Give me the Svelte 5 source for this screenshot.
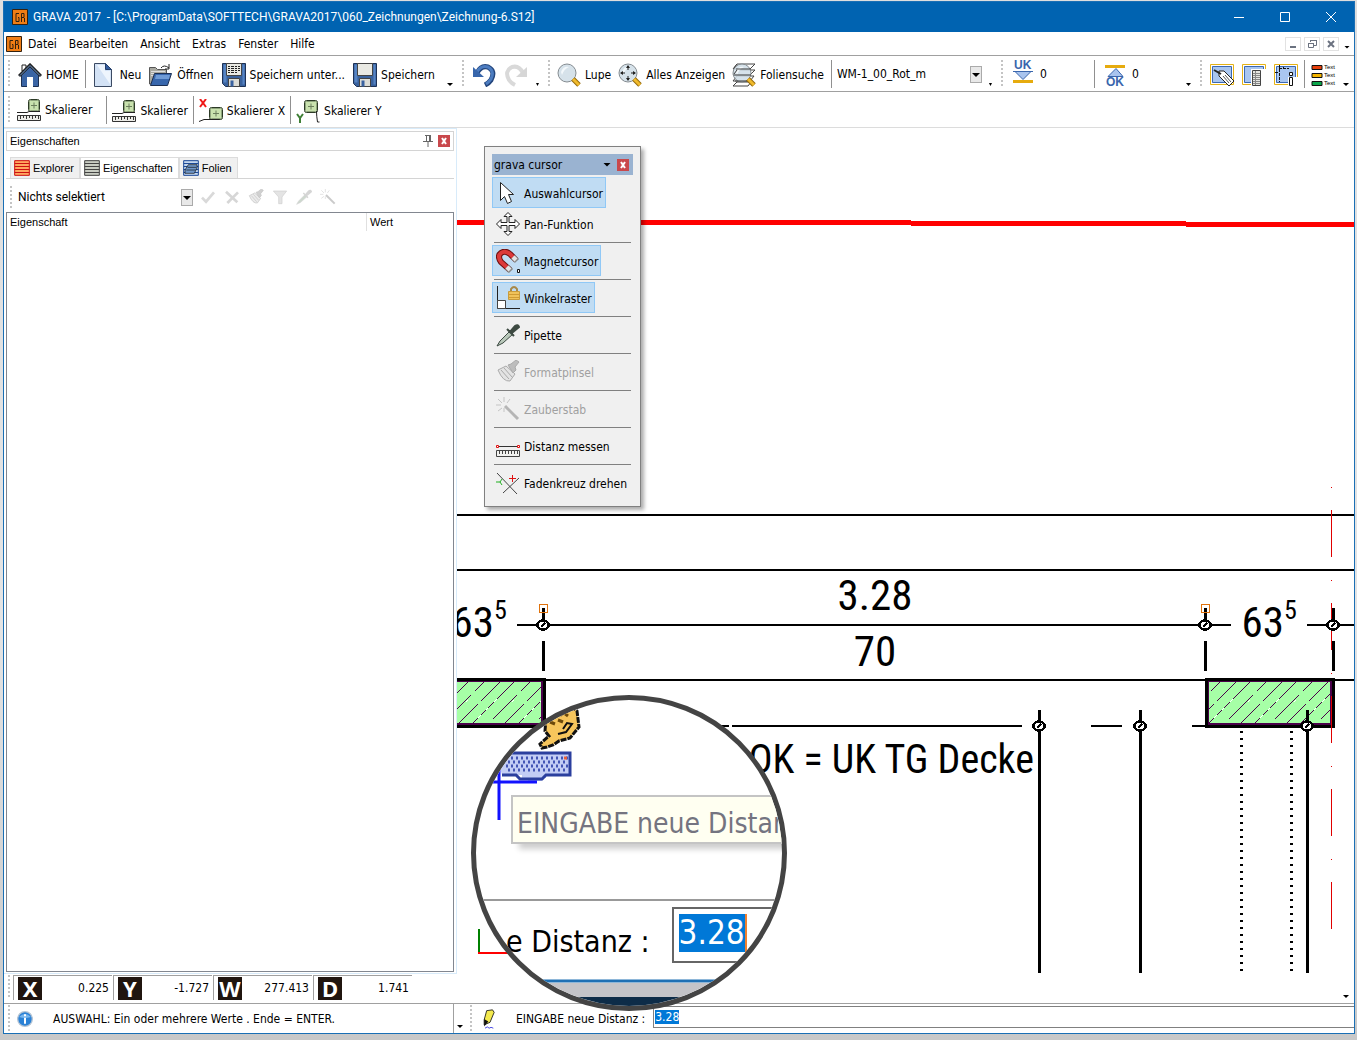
<script>
  import { onMount } from "svelte";

  const menu = ["Datei", "Bearbeiten", "Ansicht", "Extras", "Fenster", "Hilfe"];

  const fileTools = [
    { icon: "home", label: "HOME", divider: true },
    { icon: "new", label: "Neu" },
    { icon: "open", label: "Öffnen" },
    { icon: "saveas", label: "Speichern unter..." },
    { icon: "save", label: "Speichern" },
  ];

  const zoomTools = [
    { icon: "zoom", label: "Lupe" },
    { icon: "zoomall", label: "Alles Anzeigen" },
    { icon: "zoomlayer", label: "Foliensuche" },
  ];

  const scaleTools = [
    { icon: "scale", label: "Skalierer" },
    { icon: "scale", label: "Skalierer" },
    { icon: "scalex", label: "Skalierer X" },
    { icon: "scaley", label: "Skalierer Y" },
  ];

  const panelTabs = [
    { icon: "listred", label: "Explorer" },
    { icon: "listgray", label: "Eigenschaften" },
    { icon: "listblue", label: "Folien" },
  ];

  const panelTools = [
    { icon: "check", label: "Übernehmen" },
    { icon: "cross", label: "Verwerfen" },
    { icon: "brush", label: "Formatpinsel" },
    { icon: "filter", label: "Filter" },
    { icon: "dropper", label: "Pipette" },
    { icon: "wand", label: "Zauberstab" },
  ];

  const coords = [
    { axis: "X", value: "0.225" },
    { axis: "Y", value: "-1.727" },
    { axis: "W", value: "277.413" },
    { axis: "D", value: "1.741" },
  ];

  let cursors = $state([
    { icon: "arrow", label: "Auswahlcursor", on: true },
    { icon: "pan", label: "Pan-Funktion", divider: true },
    { icon: "magnet", label: "Magnetcursor", on: true, divider: true },
    { icon: "angle", label: "Winkelraster", on: true, divider: true },
    { icon: "dropper", label: "Pipette", divider: true },
    { icon: "brush", label: "Formatpinsel", disabled: true, divider: true },
    { icon: "wand", label: "Zauberstab", disabled: true, divider: true },
    { icon: "measure", label: "Distanz messen", divider: true },
    { icon: "rotate", label: "Fadenkreuz drehen" },
  ]);

  let activeTab = $state("Eigenschaften");
  let distance = $state("3.28");
  let distanceInput;

  // sheet geometry, in drawing pixels
  const extensions = [543, 1205, 1333];
  const knots = [
    [543, 625],
    [1205, 625],
    [1333, 625],
    [1039, 726],
    [1140, 726],
    [1307, 726],
  ];
  const posts = [1039, 1140, 1307];
  const walls = [
    { x: 417, w: 127 },
    { x: 1206, w: 127 },
  ];

  onMount(() => {
    distanceInput.focus();
    distanceInput.select();
  });
</script>

{#snippet icon(name)}
  <svg class="icon" viewBox="0 0 24 24" aria-hidden="true">
    {#if name === "home"}
      <path d="M4 2h4v6h-4z" fill="#fff" stroke="#222" />
      <path d="M3.500 12L12 4l8.500 8v11.500h-17z" fill="#3a64a4" stroke="#1c2f52" />
      <path d="M1 13L12 2l11 11" fill="none" stroke="#222" stroke-width="3" />
      <path d="M2 12.500L12 2.500l10 10" fill="none" stroke="#6f9ad2" stroke-width="1" />
      <path d="M9 24v-10h6v10z" fill="#fff" />
    {:else if name === "new"}
      <path d="M2.500 .5h11l6 6v17h-17z" fill="#d3e2f5" stroke="#3b4a63" />
      <path d="M5 2h8v6h5v13z" fill="#eef5fd" />
      <path d="M13.500 .5v6h6z" fill="#345d9e" stroke="#26406c" />
    {:else if name === "open"}
      <path d="M.5 21V4.500h6l2 2h9v14z" fill="#a8a8a0" stroke="#555" />
      <path d="M2 8.500h14M2 10.500h14M2 12.500h14" stroke="#ddd" />
      <path d="M5.500 10.500h17l-4 12h-17z" fill="#3867ad" stroke="#1c2f52" />
      <path d="M7 12h14l-1 4H6z" fill="#6f9bd6" />
      <path d="M12 5q3-4 8 0M20 1v5h-4" fill="none" stroke="#222" />
    {:else if name === "save" || name === "saveas"}
      <path d="M.5 .5h23v23h-20l-3-3z" fill="#39619c" stroke="#1d3155" />
      <path d="M1.500 1.500h3v18h-3zM20.500 1.500h2v20h-2z" fill="#5684c4" />
      <path d="M4.500 .5h15v12h-15z" fill="#e9e9e3" stroke="#444" />
      <path d="M6.500 15.500h11v8h-11z" fill="#dcdcd6" stroke="#444" />
      <path d="M8.500 17.500h3v6h-3z" fill="#3a62a0" />
      {#if name === "saveas"}
        <path d="M6 3.500h12M6 5.500h12M6 7.500h12M6 9.500h9" stroke="#222" stroke-dasharray="2 1 3 1" />
      {/if}
    {:else if name === "undo"}
      <path d="M5 10Q9 2 16 4Q24 8 19 17Q17 20 13 22" fill="none" stroke="#23457c" stroke-width="5" />
      <path d="M5 9Q9 2 16 4Q23 8 19 16Q17 19 14 21" fill="none" stroke="#4c7cc0" stroke-width="3" />
      <path d="M1 4v10h11z" fill="#3766ab" />
    {:else if name === "redo"}
      <path d="M19 10Q15 2 8 4Q0 8 5 17Q7 20 11 22" fill="none" stroke="#d9d9d9" stroke-width="4" />
      <path d="M23 4v10H12z" fill="#d6d6d6" />
    {:else if name === "zoom" || name === "zoomall" || name === "zoomlayer"}
      {#if name === "zoomlayer"}
        <path d="M5 1h18l-5 5H1zM5 7h18l-5 5H1zM5 13h17l-4 5H1zM5 19h14l-3 4H1z" fill="#fff" stroke="#444" />
      {/if}
      <circle cx="10" cy="10" r="9" fill="#cfdde6" fill-opacity=".85" stroke="#858c91" />
      <path d="M4 9Q6 3 12 4Q7 6 5 12z" fill="#f3f8fb" />
      {#if name === "zoomlayer"}
        <path d="M4 6h15M2 12h17M3 18h12M5 1L2 5M5 7l-3 4" fill="none" stroke="#444" />
      {/if}
      <path d="M16 16l6 6" stroke="#93690b" stroke-width="5" />
      <path d="M16 16l6 6" stroke="#f0ba2c" stroke-width="3" />
      {#if name === "zoomall"}
        <path d="M10 3v4M10 13v4M3 10h4M13 10h4" stroke="#222" stroke-width="1" />
        <path d="M8 5l2-3 2 3zM8 15l2 3 2-3zM5 8l-3 2 3 2zM15 8l3 2-3 2z" fill="#222" />
      {/if}
    {:else if name === "scale" || name === "scalex" || name === "scaley"}
      {#if name === "scale"}
        <rect x="11.500" y="1.500" width="11" height="12" rx="2" fill="#c9e2ae" stroke="#2c3a26" />
        <rect x="12.500" y="2.500" width="9" height="10" rx="1" fill="none" stroke="#8fa57d" />
        <path d="M14 7.500h6M17 4.500v6" stroke="#6b7f5c" />
        <path d="M0 14.500h10l2-1h11" fill="none" stroke="#222" />
        <path d="M.5 17.500h23v5H.5z" fill="#ecece8" stroke="#333" />
        <path d="M3.500 18v3M6.500 18v2M9.500 18v3M12.500 18v2M15.500 18v3M18.500 18v2M21.500 18v3" stroke="#333" />
      {:else if name === "scalex"}
        <path d="M1 0l6 8M7 0l-6 8" stroke="#f01818" stroke-width="2" />
        <rect x="10.500" y="8.500" width="13" height="12" rx="2" fill="#c9e2ae" stroke="#2c3a26" />
        <rect x="11.500" y="9.500" width="11" height="10" rx="1" fill="none" stroke="#8fa57d" />
        <path d="M14 14.500h6M17 11.500v6" stroke="#6b7f5c" />
        <path d="M0 22.500q5-3 10-2h10" fill="none" stroke="#222" />
      {:else}
        <rect x="8.500" y="1.500" width="13" height="12" rx="2" fill="#c9e2ae" stroke="#2c3a26" />
        <rect x="9.500" y="2.500" width="11" height="10" rx="1" fill="none" stroke="#8fa57d" />
        <path d="M12 7.500h6M15 4.500v6" stroke="#6b7f5c" />
        <path d="M20.500 12q0 5 1 11h2" fill="none" stroke="#222" />
        <path d="M1 15l3 4 3-4M4 19v5" fill="none" stroke="#3f7f35" stroke-width="2" />
      {/if}
    {:else if name === "uk"}
      <path d="M4 9.500h16l-8 8z" fill="#a9c4ee" stroke="#3a66ad" />
      <path d="M2 9.500h20" stroke="#3a66ad" />
      <path d="M2 18h20v3H2z" fill="#e6ab0e" />
    {:else if name === "ok"}
      <path d="M2 3h20v3H2z" fill="#e6ab0e" />
      <path d="M5 14.500h15l-7-8z" fill="#a9c4ee" stroke="#3a66ad" />
    {:else if name === "viewtag" || name === "viewlist" || name === "viewplan"}
      <path d="M.5 1.500h23v20H.5z" fill="#fff" stroke="#e5b216" />
      <path d="M2.500 3.500h19v16h-19z" fill="#a9c6f0" stroke="#3c68b2" />
      {#if name === "viewtag"}
        <path d="M9 8h5l10 10-5 5L9 13z" fill="#fff" stroke="#222" />
        <path d="M4 7l7 4" stroke="#222" stroke-width="2" />
        <path d="M13 13l6 7M15 12l6 7" stroke="#555" />
      {:else if name === "viewlist"}
        <path d="M9 6h15v18H9z" fill="#fff" />
        <path d="M10.500 7.500h8v15h-8z" fill="#e6e6e2" stroke="#444" />
        <path d="M11 10.500h7M11 12.500h7M11 14.500h7M11 16.500h7M11 18.500h7M11 20.500h7M13.500 8v14" stroke="#888" />
      {:else}
        <path d="M5.500 2v17M1 9.500h4M5 5.500h10M9.500 4v2" stroke="#111" stroke-dasharray="3 1" />
        <path d="M14 14h10v10H14z" fill="#fff" />
        <path d="M15.500 9.500h3v3h-3zM15.500 14.500h3v8h-3z" fill="#fff" stroke="#111" />
      {/if}
    {:else if name === "legend"}
      <path d="M1 2.500h10v4H1z" fill="#e8400c" stroke="#111" />
      <path d="M1 10.500h10v4H1z" fill="#f3b400" stroke="#111" />
      <path d="M1 18.500h10v4H1z" fill="#0ba64b" stroke="#111" />
    {:else if name === "listred" || name === "listgray" || name === "listblue"}
      {@const line = name === "listred" ? "#cc1111" : name === "listgray" ? "#444" : "#1d4a98"}
      <path
        d="M1 1h22v22H1z"
        fill={name === "listred" ? "#ffa860" : name === "listgray" ? "#c9cdc3" : "#c3d6ee"}
        stroke={line}
        stroke-width="1.500"
      />
      <path d="M1 5.250h22M1 9.750h22M1 14.250h22M1 18.750h22" stroke={line} stroke-width="1.500" />
      {#if name === "listblue"}
        <path d="M8 7h13v5l-4 8H3v-5z" fill="#6f97c9" stroke="#111" />
        <path d="M7 11h13M5 15h14" stroke="#111" />
      {/if}
    {:else if name === "check"}
      <path d="M3 13l6 6L21 5" fill="none" stroke="#c9c9c9" stroke-width="4" />
    {:else if name === "cross"}
      <path d="M3 4l17 16M21 5L5 21" stroke="#c6c6c6" stroke-width="4" />
    {:else if name === "filter"}
      <path d="M2 3h20l-7 9v10h-5V12z" fill="#d9d9d9" stroke="#bbb" />
    {:else if name === "arrow"}
      <path d="M4.500 1.500v18l4-4 3 7 4-2-3-7h5z" fill="#fff" stroke="#222" />
    {:else if name === "pan"}
      <path
        d="M12 .5l4 4h-3v6h6v-3l4.500 4.500-4.500 4.500v-3h-6v6h3l-4 4-4-4h3v-6H5v3L.5 12 5 7.500v3h6v-6H8z"
        fill="#fff"
        stroke="#222"
      />
    {:else if name === "magnet"}
      <path d="M14 21L5 13Q1 7 5 4Q9 1 14 5l6 6" fill="none" stroke="#6e1010" stroke-width="6" />
      <path d="M14 21L5 13Q1 7 5 4Q9 1 14 5l6 6" fill="none" stroke="#dc3a3a" stroke-width="4" />
      <path d="M11 18l4 4M17 8l4 4" stroke="#888" stroke-width="6" />
      <path d="M11 18l3 3M17 8l3 3" stroke="#e4e4e4" stroke-width="4" />
      <path d="M21.500 20.500h2v3h-2z" fill="#fff" stroke="#111" />
    {:else if name === "angle"}
      <path d="M1.500 0v22.500H24" fill="none" stroke="#222" />
      <path d="M1.500 14.500h8v8h-8z" fill="#fff" stroke="#444" />
      <path d="M15 6V3q3-4 6 0v3" fill="none" stroke="#a8894a" stroke-width="2" />
      <path d="M12.500 5.500h11v8h-11z" fill="#f0c35a" stroke="#c99c3c" />
      <path d="M13 8.500h10M13 11.500h10" stroke="#d09c34" />
    {:else if name === "dropper"}
      <path d="M1 23l3-5L14 8l3 3L7 20z" fill="#b9c8ba" stroke="currentColor" />
      <path d="M11 6l7 7M14 9l5-6q3-2 4 1l-6 5z" fill="currentColor" stroke="currentColor" stroke-width="2" />
    {:else if name === "brush"}
      <path d="M2 10l8-4 9 8-5 7q-7 1-12-11z" fill="#e3e3e3" stroke="#aaa" />
      <path d="M5 10l8 9M8 8l8 9" stroke="#aaa" />
      <path d="M12 5l5 8 3-3-1-3 4-5-3-2-5 4z" fill="#bdbdbd" stroke="#aaa" />
    {:else if name === "wand"}
      <path d="M9 9l13 13" stroke="#b5b5b5" stroke-width="3" />
      <path d="M8 0v5M0 8h5M2 2l4 4M14 2l-3 4M2 14l4-3M8 11v4" stroke="#c4c4c4" />
    {:else if name === "measure"}
      <path d="M1 12.500h22" stroke="#333" />
      <path d="M.5 11.500h2v2h-2zM21.500 11.500h2v2h-2z" fill="#fff" stroke="#e01010" />
      <path d="M.5 16.500h23v6H.5z" fill="#f2f2f0" stroke="#444" />
      <path d="M3.500 17v3M6.500 17v3M9.500 17v3M12.500 17v3M15.500 17v3M18.500 17v3M21.500 17v3" stroke="#444" />
    {:else if name === "rotate"}
      <path d="M1 2l20 21M7 22L23 7" stroke="#444" />
      <path d="M16.500 4v7M13 7.500h7" stroke="#e01010" />
      <path d="M0 11h4l2 3M4 11l2-3" fill="none" stroke="#20b020" />
    {:else if name === "pencil"}
      <path d="M8 2l7-1 2 3-5 12-7 3V13z" fill="#f3e94e" stroke="#111" stroke-width="1" />
      <path d="M5 12l5 3-5 6z" fill="#111" />
      <path d="M6 23q3-3 5 0q2-2 5 0" fill="none" stroke="#2727e0" />
    {:else if name === "info"}
      <circle cx="12" cy="12" r="11" fill="#2b82d6" stroke="#b5c4d4" stroke-width="2" />
      <path d="M3 9Q12 0 21 9Q12 12 3 9z" fill="#78b6ee" />
      <path d="M12 5v3M12 10v9" stroke="#fff" stroke-width="3" />
    {/if}
  </svg>
{/snippet}

{#snippet logo()}
  <svg class="logo" viewBox="0 0 16 16" aria-hidden="true">
    <path d="M.5 .5h15v15H.5z" fill="#f07d14" stroke="#33210f" />
    <path d="M7 4.500H4v8h3v-4H6M9.500 13V4.500H12v4H10M12.500 9v4" fill="none" stroke="#33210f" />
  </svg>
{/snippet}

{#snippet tool(item)}
  <button type="button" class="tool">
    {@render icon(item.icon)}
    {item.label}
  </button>
{/snippet}

{#snippet more()}
  <button type="button" class="more" aria-label="Weitere Optionen"></button>
{/snippet}

<div class="desktop">
  <div class="window">
    <header class="titlebar">
      {@render logo()}
      <h1>GRAVA 2017&nbsp; - [C:\ProgramData\SOFTTECH\GRAVA2017\060_Zeichnungen\Zeichnung-6.S12]</h1>
      <div class="window-buttons">
        <button type="button" aria-label="Minimieren">
          <svg viewBox="0 0 12 12"><path d="M1 6.500h10" /></svg>
        </button>
        <button type="button" aria-label="Maximieren">
          <svg viewBox="0 0 12 12"><path d="M1.500 1.500h9v9h-9z" /></svg>
        </button>
        <button type="button" aria-label="Schließen">
          <svg viewBox="0 0 12 12"><path d="M1 1l10 10M11 1L1 11" /></svg>
        </button>
      </div>
    </header>

    <nav class="menubar">
      {@render logo()}
      {#each menu as entry}
        <button type="button">{entry}</button>
      {/each}
      <div class="mdi">
        <button type="button" aria-label="Dokument minimieren">
          <svg viewBox="0 0 12 12"><path d="M3 9h6" /></svg>
        </button>
        <button type="button" aria-label="Dokument wiederherstellen">
          <svg viewBox="0 0 12 12"><path class="thin" d="M4.500 4V2.500h6v5H8M4 2.500h7M2.500 5.500h5v4h-5zM2 5.500h6" /></svg>
        </button>
        <button type="button" aria-label="Dokument schließen">
          <svg viewBox="0 0 12 12"><path d="M3 3l6 6M9 3L3 9" /></svg>
        </button>
        {@render more()}
      </div>
    </nav>

    <div class="toolbar">
      <div class="band file">
        {#each fileTools as item}
          {@render tool(item)}
          {#if item.divider}<i class="divider"></i>{/if}
        {/each}
        {@render more()}
      </div>
      <div class="band history">
        <button type="button" class="tool" aria-label="Rückgängig">{@render icon("undo")}</button>
        <button type="button" class="tool" aria-label="Wiederherstellen">{@render icon("redo")}</button>
        {@render more()}
      </div>
      <div class="band zoom">
        {#each zoomTools as item}
          {@render tool(item)}
        {/each}
        <i class="divider"></i>
        <label class="combo">
          <select aria-label="Folie">
            <option>WM-1_00_Rot_m</option>
          </select>
          <i class="drop"></i>
        </label>
        {@render more()}
      </div>
      <div class="band levels">
        <label class="level">
          <span class="mark">{@render icon("uk")}<b>UK</b></span>
          <input value="0" aria-label="Unterkante" />
        </label>
        <i class="divider"></i>
        <label class="level">
          <span class="mark low">{@render icon("ok")}<b>OK</b></span>
          <input value="0" aria-label="Oberkante" />
        </label>
        {@render more()}
      </div>
      <div class="band views">
        <button type="button" class="tool" aria-label="Beschriftung">{@render icon("viewtag")}</button>
        <button type="button" class="tool" aria-label="Liste">{@render icon("viewlist")}</button>
        <button type="button" class="tool" aria-label="Plan">{@render icon("viewplan")}</button>
        <i class="divider"></i>
        <button type="button" class="tool legend">
          {@render icon("legend")}
          <span><small>Text</small><small>Text</small><small>Text</small></span>
        </button>
        {@render more()}
      </div>
    </div>

    <div class="toolbar second">
      <div class="band scales">
        {#each scaleTools as item, i}
          {#if i}<i class="divider"></i>{/if}
          {@render tool(item)}
        {/each}
      </div>
    </div>

    <main>
      <aside>
        <section class="panel">
          <header>
            <h2>Eigenschaften</h2>
            <button type="button" class="pin" aria-label="Anheften">
              <svg viewBox="0 0 12 12"><path d="M3 .5h6M4.500 1v5M8.500 1v5M7.500 1v5M1 6.500h10M6 7v5" /></svg>
            </button>
            <button type="button" class="close" aria-label="Schließen">
              <svg viewBox="0 0 12 12"><path d="M4 3l4 6M8 3L4 9" /></svg>
            </button>
          </header>
          <div class="tabs" role="tablist">
            {#each panelTabs as tab}
              <button
                type="button"
                role="tab"
                aria-selected={activeTab === tab.label}
                class:active={activeTab === tab.label}
                onclick={() => (activeTab = tab.label)}
              >
                {@render icon(tab.icon)}
                {tab.label}
              </button>
            {/each}
          </div>
          <div class="panel-tools">
            <label class="combo">
              <select aria-label="Auswahl">
                <option>Nichts selektiert</option>
              </select>
              <i class="drop"></i>
            </label>
            {#each panelTools as item}
              <button type="button" disabled aria-label={item.label}>{@render icon(item.icon)}</button>
            {/each}
          </div>
          <div class="sheet">
            <table>
              <thead>
                <tr><th>Eigenschaft</th><th>Wert</th></tr>
              </thead>
            </table>
          </div>
        </section>
        <div class="coords">
          {#each coords as c}
            <div class="coord"><b>{c.axis}</b><span>{c.value}</span></div>
          {/each}
        </div>
      </aside>

      <div class="workspace">
        <svg class="drawing" aria-hidden="true">
          <defs>
            <pattern id="hatch" width="46" height="46" patternUnits="userSpaceOnUse">
              <path d="M0 46L46 0" stroke="#4a004a" fill="none" />
              <path d="M-2 18L16 0M16 46L46 16" stroke="#4a004a" stroke-dasharray="18 6" fill="none" />
              <path d="M0 32L32 0M32 46L46 32" stroke="#4a004a" stroke-dasharray="26 3" fill="none" />
              <path d="M18 28l3-3M34 12l3-3M26 20l2-2M6 12l2-2" stroke="#fff" />
            </pattern>
          </defs>
          <!-- sheet origin: top left corner of the workspace -->
          <g transform="translate(-457 -128)">
            <path class="cut" d="M457 222H911M911 223H1186M1186 224H3000" />
            <path class="line" d="M457 515H3000M457 570H3000M517 625H1231M1307 625H3000M457 680H3000" />
            <path class="line" d="M640 726H729M732 726H1022M1091 726H1122M1192 726H1208" />
            {#each walls as wall}
              <rect x={wall.x} y="679" width={wall.w} height="47" fill="#a6ffa6" />
              <rect x={wall.x} y="679" width={wall.w} height="47" fill="url(#hatch)" />
              <rect x={wall.x + 2} y="681" width={wall.w - 4} height="43" class="wall-inner" />
              <rect x={wall.x} y="679" width={wall.w} height="47" class="wall" />
            {/each}
            {#each extensions as x}
              <path class="post" d="M{x} 608v13M{x} 641v30" />
            {/each}
            {#each posts as x}
              <path class="post" d="M{x} 710v10M{x} 731V973" />
            {/each}
            <path class="dots" d="M1241 731V972M1291 731V972" />
            <path class="axis" d="M1331 487V952" />
            {#each knots as [x, y]}
              <g class="knot">
                <ellipse cx={x} cy={y} rx="6" ry="4" />
                <circle cx={x} cy={y} r="5" fill="none" />
                <path d="M{x - 2} {y + 2}l4-4" />
              </g>
            {/each}
            <path class="grip-box" d="M539 604h8v8h-8zM1201 604h8v8h-8z" />
            <path d="M479 929v24" stroke="#008000" stroke-width="2" />
            <path d="M478 953h40" stroke="#f00" stroke-width="2" />
            <g class="dim">
              <text x="875" y="610" text-anchor="middle">3.28</text>
              <text x="875" y="666" text-anchor="middle">70</text>
              <text x="494" y="637" text-anchor="end">63</text>
              <text x="494" y="619" class="sup">5</text>
              <text x="1284" y="637" text-anchor="end">63</text>
              <text x="1284" y="619" class="sup">5</text>
              <text x="1034" y="773" text-anchor="end" class="note">OK = UK TG Decke</text>
            </g>
          </g>
        </svg>
        <i class="more corner"></i>

        <section class="palette">
          <header>
            <h2>grava cursor</h2>
            {@render more()}
            <button type="button" class="close" aria-label="Schließen">
              <svg viewBox="0 0 12 12"><path d="M4 3l4 6M8 3L4 9" /></svg>
            </button>
          </header>
          {#each cursors as c}
            <button type="button" class="cursor" class:on={c.on} disabled={c.disabled} onclick={() => (c.on = !c.on)}>
              {@render icon(c.icon)}
              <span>{c.label}</span>
            </button>
            {#if c.divider}<hr />{/if}
          {/each}
        </section>

        <div class="lens">
          <svg class="lens-art" viewBox="0 0 306 306" aria-hidden="true">
            <path d="M0 200h306" stroke="#999" stroke-width="2" />
            <path d="M0 283h306v14H0z" fill="#c4c4c8" />
            <path d="M0 281h306" stroke="#1f70b4" stroke-width="3" />
            <path d="M0 297h306v9H0z" fill="#0d2c48" />
            <path
              d="M70 18l10-8 14-4 7 5 2 16-9 11-11 3-6 4-6 2-5 1-2-4 9-8-4-5z"
              fill="#f7c65c"
              stroke="#111"
              stroke-width="3"
              stroke-dasharray="6 1"
            />
            <path d="M76 14l3 4M83 11l3 5M74 22l5 2M82 20l5 2M88 13l4 3" stroke="#6d4a0a" stroke-width="3" />
            <path d="M82 34l8-2 6-8-5-1-4 6" fill="none" stroke="#111" stroke-width="2" />
            <path d="M20 53h74v22H70v3h-4v3H52v-3h-6v-3H26z" fill="#c3cdf5" />
            <path d="M24 53h70v22H70l-4 4H44l-4-4H26" fill="none" stroke="#2b3f9e" stroke-width="3" />
            <path
              d="M30 58h62M32 62h60M30 66h62M32 70h60"
              stroke="#4355b5"
              stroke-width="3"
              stroke-dasharray="2 3"
            />
            <path d="M28 58h4M88 58h3" stroke="#e8603c" stroke-width="3" />
            <path d="M23 70v50M17 82h44" stroke="#1212ff" stroke-width="3" />
          </svg>
          <span class="tip">EINGABE neue Distanz</span>
          <div class="lens-row">
            <span>e Distanz :</span>
            <span class="lens-field"><mark>{distance}</mark></span>
          </div>
        </div>
      </div>
    </main>

    <footer>
      <div class="band status">
        {@render icon("info")}
        <p>AUSWAHL: Ein oder mehrere Werte . Ende = ENTER.</p>
      </div>
      {@render more()}
      <label class="band prompt">
        {@render icon("pencil")}
        <span>EINGABE neue Distanz :</span>
        <input bind:value={distance} bind:this={distanceInput} />
      </label>
    </footer>
  </div>
</div>

<style>
  :global(body) {
    margin: 0;
    background: #d6d8da;
  }

  .desktop {
    min-height: 100vh;
    box-sizing: border-box;
    display: flex;
    padding: 1px 2px 6px 3px;
    background: linear-gradient(#dedede, #e4e4e4 60%, #c8c8c8);
    font-family: "DejaVu Sans Condensed", Tahoma, "Noto Sans", sans-serif;
    font-size: 12px;
    color: #000;
  }

  .window {
    flex: 1;
    min-width: 0;
    display: flex;
    flex-direction: column;
    border: 1px solid #1a6fb5;
    background: #fff;
  }

  button,
  input,
  select {
    font: inherit;
    color: inherit;
    border: 0;
    padding: 0;
    margin: 0;
    background: none;
    border-radius: 0;
    outline: none;
  }

  button {
    display: flex;
    align-items: center;
    justify-content: center;
    white-space: nowrap;
  }

  h1,
  h2,
  p {
    margin: 0;
    font-size: inherit;
    font-weight: 400;
    white-space: nowrap;
  }

  svg {
    display: block;
  }

  .icon {
    width: 24px;
    height: 24px;
    flex: none;
  }

  .logo {
    width: 16px;
    height: 16px;
    flex: none;
  }

  .titlebar {
    display: flex;
    align-items: center;
    height: 30px;
    padding-left: 8px;
    gap: 5px;
    background: #0063b1;
    color: #fff;
    font-family: "Segoe UI", Roboto, "Noto Sans", sans-serif;
  }

  .window-buttons {
    display: flex;
    margin-left: auto;
  }

  .window-buttons button {
    width: 46px;
    height: 30px;
  }

  .window-buttons svg,
  .mdi svg,
  .close svg,
  .pin svg {
    width: 12px;
    height: 12px;
    fill: none;
    stroke: currentColor;
  }

  .menubar {
    display: flex;
    align-items: center;
    height: 23px;
    padding-left: 2px;
    border-bottom: 1px solid #a0a0a0;
  }

  .menubar > button {
    padding: 1px 6px 0;
  }

  .mdi {
    display: flex;
    align-items: center;
    gap: 3px;
    margin-left: auto;
    padding-right: 4px;
    color: #6b7280;
  }

  .mdi button:not(.more) {
    width: 16px;
    height: 14px;
    border: 1px solid #e2e2e2;
  }

  .mdi path {
    stroke-width: 2;
  }

  .mdi .thin {
    stroke-width: 1;
  }

  .more {
    align-self: flex-end;
    width: 6px;
    height: 3px;
    margin: 0 5px 5px auto;
    background: #000;
    clip-path: polygon(0 0, 100% 0, 50% 100%);
  }

  .mdi .more {
    margin: 0 0 2px 2px;
  }

  .toolbar {
    display: flex;
    height: 35px;
    border-bottom: 1px solid #a0a0a0;
  }

  .toolbar.second {
    border-bottom-color: #dcdcdc;
  }

  .band {
    display: flex;
    align-items: center;
    gap: 8px;
    box-sizing: border-box;
    min-width: 0;
  }

  .toolbar .band {
    padding-top: 1px;
  }

  .band::before,
  .panel-tools::before,
  .coords::before {
    content: "";
    flex: none;
    width: 2px;
    height: 28px;
    margin-left: 4px;
    background: repeating-linear-gradient(#c4c4c4 0 2px, transparent 2px 4px);
  }

  .file {
    width: 454px;
  }

  .history {
    width: 86px;
  }

  .zoom {
    width: 453px;
    gap: 7px;
  }

  .levels {
    width: 199px;
  }

  .views {
    flex: 1;
  }

  .scales {
    gap: 5px;
  }

  .scales .tool:first-of-type {
    padding: 0 9px 0 2px;
  }

  .tool {
    gap: 4px;
    padding-top: 1px;
  }

  .divider {
    flex: none;
    width: 1px;
    height: 28px;
    background: #909090;
  }

  .file .divider,
  .views .divider {
    margin: 0 -2px;
  }

  .combo {
    display: flex;
    flex: none;
    position: relative;
  }

  .combo select {
    appearance: none;
    width: 145px;
    height: 20px;
  }

  .zoom .combo {
    margin-left: -2px;
  }

  .drop {
    position: absolute;
    right: 0;
    top: 2px;
    width: 10px;
    height: 15px;
    border: 1px solid #aaa;
    background: #e8e8e8;
    pointer-events: none;
  }

  .drop::after {
    content: "";
    position: absolute;
    left: 1px;
    top: 6px;
    border: 4px solid transparent;
    border-top-color: #000;
    border-bottom: 0;
  }

  .level {
    display: flex;
    align-items: center;
    gap: 5px;
  }

  .level input {
    width: 46px;
  }

  .mark {
    position: relative;
  }

  .mark b {
    position: absolute;
    left: 3px;
    top: -3px;
    font: bold 12px/12px "Liberation Sans", Arial, sans-serif;
    color: #3a66ad;
  }

  .mark.low b {
    top: 14px;
  }

  .legend {
    gap: 1px;
  }

  .legend .icon {
    margin-right: -12px;
  }

  .legend small {
    display: block;
    font: 6px/8px "Liberation Sans", Arial, sans-serif;
  }

  main {
    flex: 1;
    display: flex;
    min-height: 0;
  }

  aside {
    flex: none;
    width: 453px;
    display: flex;
    flex-direction: column;
  }

  .panel {
    flex: 1;
    display: flex;
    flex-direction: column;
    padding: 2px 2px 1px;
    border: 1px solid #d8ebfa;
    border-left: 0;
    font-family: "Liberation Sans", Arial, sans-serif;
    font-size: 11px;
  }

  .panel header {
    display: flex;
    align-items: center;
    gap: 4px;
    height: 18px;
    padding: 0 3px;
    border: 1px solid #d4d4d4;
  }

  .pin {
    margin-left: auto;
    color: #666;
  }

  .close {
    background: #c9484c;
    color: #fff;
  }

  .close path {
    stroke-width: 2;
  }

  .tabs {
    display: flex;
    padding: 6px 0 0 4px;
    border-bottom: 1px solid #d4d4d4;
  }

  .tabs button {
    gap: 3px;
    height: 21px;
    padding: 0 5px 0 3px;
    background: #f0f0f0;
    border: 1px solid #dcdcdc;
    border-bottom: 0;
  }

  .tabs .active {
    background: #fff;
    margin-bottom: -1px;
  }

  .tabs .icon {
    width: 16px;
    height: 16px;
  }

  .panel-tools {
    display: flex;
    align-items: center;
    gap: 6px;
    height: 33px;
    padding-top: 2px;
    box-sizing: border-box;
  }

  .panel-tools::before {
    height: 22px;
  }

  .panel-tools .combo select {
    width: 175px;
    font-family: "Segoe UI", Roboto, "Noto Sans", sans-serif;
    font-size: 12px;
  }

  .panel-tools button {
    width: 18px;
    color: #c4c4c4;
  }

  .panel-tools .icon {
    width: 16px;
    height: 16px;
    opacity: 0.7;
  }

  .sheet {
    flex: 1;
    border: 1px solid #828790;
  }

  table {
    width: 100%;
    border-collapse: collapse;
  }

  th {
    height: 18px;
    padding: 0 3px;
    text-align: left;
    font-weight: 400;
  }

  th + th {
    width: 80px;
    border-left: 1px solid #e0e0e0;
  }

  .coords {
    display: flex;
    height: 29px;
    padding-top: 1px;
    box-sizing: border-box;
  }

  .coords::before {
    height: 24px;
    margin-right: 3px;
  }

  .coord {
    display: flex;
    align-items: center;
    justify-content: space-between;
    box-sizing: border-box;
    width: 99px;
    height: 25px;
    margin-right: 1px;
    padding: 0 3px 0 4px;
    border: solid #a0a0a0;
    border-width: 1px 0 0 1px;
  }

  .coord b {
    width: 24px;
    height: 23px;
    background: #20150f;
    color: #fff;
    font: bold 22px/23px "Noto Sans", sans-serif;
    text-align: center;
  }

  .workspace {
    flex: 1;
    min-width: 0;
    position: relative;
  }

  .drawing {
    position: absolute;
    inset: 0;
    width: 100%;
    height: 100%;
    shape-rendering: crispEdges;
  }

  .cut {
    stroke: #f00;
    stroke-width: 5;
  }

  .line {
    stroke: #000;
    stroke-width: 2;
  }

  .post {
    stroke: #000;
    stroke-width: 3;
  }

  .wall,
  .wall-inner {
    fill: none;
    stroke: #000;
    stroke-width: 3;
  }

  .wall-inner {
    stroke: #4a004a;
    stroke-width: 2;
  }

  .dots {
    stroke: #000;
    stroke-width: 3;
    stroke-dasharray: 2 5;
  }

  .axis {
    stroke: #e00000;
    stroke-width: 1;
    stroke-dasharray: 1 22 47 23;
  }

  .knot {
    fill: #fff;
    stroke: #000;
    stroke-width: 2;
  }

  .grip-box {
    fill: none;
    stroke: #e0720c;
    stroke-width: 1;
  }

  .dim {
    font-family: "Liberation Sans Narrow", "Arial Narrow", "Roboto Condensed", "Liberation Sans", sans-serif;
    font-size: 43px;
  }

  .dim .sup {
    font-size: 26px;
  }

  .dim .note {
    font-size: 40px;
  }

  .corner {
    position: absolute;
    right: 0;
    bottom: 0;
  }

  .palette {
    position: absolute;
    left: 27px;
    top: 18px;
    width: 141px;
    padding: 7px 7px 8px;
    border: 1px solid #808080;
    background: #f0f0f0;
    box-shadow: 3px 3px 4px #0005;
  }

  .palette header {
    display: flex;
    align-items: center;
    height: 21px;
    margin-bottom: 2px;
    padding: 0 4px 0 2px;
    background: #9ab3d1;
  }

  .palette .more {
    align-self: center;
    width: 8px;
    height: 4px;
    margin: 0 6px 0 auto;
  }

  .cursor {
    box-sizing: border-box;
    height: 31px;
    gap: 4px;
    padding: 0 2px 0 3px;
    border: 1px solid transparent;
    color: #000;
  }

  .cursor span {
    padding-top: 2px;
  }

  .cursor.on {
    background: #c0dcf3;
    border-color: #90c8f6;
  }

  .cursor:disabled {
    color: #a0a0a0;
  }

  .cursor .icon {
    color: #3d4a42;
  }

  hr {
    height: 1px;
    margin: 3px 2px 2px;
    border: 0;
    background: #808080;
  }

  .lens {
    position: absolute;
    z-index: 1;
    left: 14px;
    top: 567px;
    width: 306px;
    height: 306px;
    border: 5px solid #444;
    border-radius: 50%;
    overflow: hidden;
    background: #fff;
    white-space: nowrap;
  }

  .lens-art {
    position: absolute;
    inset: 0;
  }

  .tip {
    position: absolute;
    left: 35px;
    top: 95px;
    padding: 0 4px;
    border: 2px solid #c4c4c4;
    background: #fffff1;
    box-shadow: 8px 5px 6px #0003;
    color: #747480;
    font-size: 28px;
    line-height: 54px;
    height: 45px;
  }

  .lens-row {
    position: absolute;
    left: 30px;
    top: 207px;
    display: flex;
    align-items: center;
    gap: 22px;
    font-size: 30px;
  }

  .lens-row > span:first-child {
    padding-top: 12px;
  }

  .lens-field {
    width: 160px;
    height: 52px;
    padding-left: 5px;
    border: 2px solid #666;
  }

  mark {
    display: inline-block;
    margin-top: 5px;
    border-right: 2px solid #f08030;
    background: #0078d7;
    color: #fff;
    font-size: 33px;
    line-height: 38px;
  }

  footer {
    display: flex;
    height: 29px;
    border-top: 1px solid #a0a0a0;
  }

  .status {
    width: 450px;
    border-right: 1px solid #a0a0a0;
  }

  .status p {
    margin-left: 12px;
  }

  .status .icon {
    width: 16px;
    height: 16px;
    margin: 0 0 0 -1px;
  }

  footer > .more {
    margin: 0 3px 5px 3px;
  }

  .prompt {
    flex: 1;
  }

  .prompt .icon {
    width: 20px;
    height: 20px;
  }

  .prompt span {
    margin-left: 8px;
  }

  .prompt input {
    flex: 1;
    align-self: flex-start;
    height: 20px;
    margin-top: 2px;
    padding-left: 1px;
    border: 1px solid #808080;
    border-right: 0;
  }

  .prompt input::selection {
    background: #0078d7;
    color: #fff;
  }
</style>
